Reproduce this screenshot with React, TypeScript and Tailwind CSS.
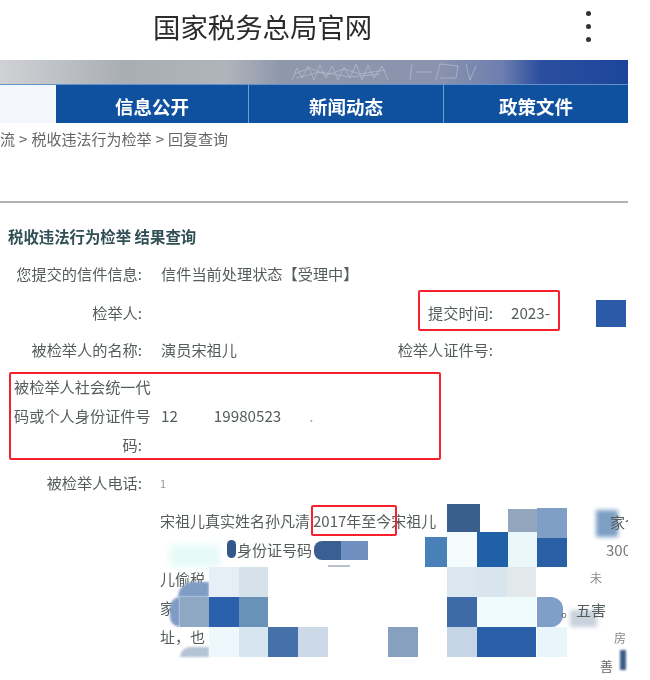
import * as React from 'react';

const cjk = "font-['Noto_Sans_CJK_SC','Noto_Sans',sans-serif]";

// mosaic patches lying over the letter text
const patches = [
	'left-[170px] top-[545px] w-[50px] h-[22px] bg-[#e6faf7] blur-[3px]',
	'left-[447px] top-[504px] w-[33px] h-[28px] bg-[#3a5f8c]',
	'left-[508px] top-[509px] w-[29px] h-[29px] bg-[#93a6bd]',
	'left-[537px] top-[508px] w-[30px] h-[30px] bg-[#7f9fc6]',
	'left-[596px] top-[510px] w-[22px] h-[27px] bg-[#7d9fc4] blur-[2px]',
	'left-[314px] top-[541px] w-[27px] h-[19px] bg-[#3a5f92] rounded-l-lg',
	'left-[341px] top-[541px] w-[27px] h-[19px] bg-[#6e8fc0]',
	'left-[227px] top-[540px] w-[9px] h-[18px] bg-[#33598c] rounded-md',
	'left-[328px] top-[565px] w-[22px] h-[2px] bg-[#b9c2cc]',
	'left-[425px] top-[537px] w-[22px] h-[30px] bg-[#4a80b8]',
	'left-[477px] top-[532px] w-[31px] h-[35px] bg-[#2060a8]',
	'left-[508px] top-[532px] w-[29px] h-[35px] bg-[#eaf7fb]',
	'left-[447px] top-[532px] w-[30px] h-[35px] bg-[#f4fbfd]',
	'left-[537px] top-[538px] w-[30px] h-[29px] bg-[#2a5fa5]',
	'left-[178px] top-[582px] w-[31px] h-[15px] bg-[#7f9cc5] rounded-tl-2xl blur-[1px]',
	'left-[209px] top-[567px] w-[30px] h-[30px] bg-[#e6eff5]',
	'left-[239px] top-[567px] w-[29px] h-[30px] bg-[#d5e2ea]',
	'left-[447px] top-[567px] w-[30px] h-[30px] bg-[#dbe6ee]',
	'left-[477px] top-[567px] w-[30px] h-[30px] bg-[#d8e4ee]',
	'left-[507px] top-[567px] w-[29px] h-[30px] bg-[#e3e8ea]',
	'left-[170px] top-[597px] w-[10px] h-[30px] bg-[#7f9cc5] rounded-l-2xl blur-[1px]',
	'left-[180px] top-[597px] w-[29px] h-[30px] bg-[#8fa8c3]',
	'left-[209px] top-[597px] w-[30px] h-[30px] bg-[#2a60ac]',
	'left-[239px] top-[597px] w-[29px] h-[30px] bg-[#6892b8]',
	'left-[447px] top-[597px] w-[30px] h-[30px] bg-[#3f6aa8]',
	'left-[477px] top-[597px] w-[59px] h-[30px] bg-[#f0fbfd]',
	'left-[537px] top-[597px] w-[26px] h-[30px] bg-[#7f9fc8] rounded-r-xl',
	'left-[570px] top-[610px] w-[27px] h-[17px] bg-[#c8d2dc] blur-[2px]',
	'left-[180px] top-[647px] w-[29px] h-[10px] bg-[#b4c4d4] rounded-tl-xl blur-[1px]',
	'left-[209px] top-[627px] w-[30px] h-[30px] bg-[#eef8fc]',
	'left-[239px] top-[627px] w-[29px] h-[30px] bg-[#d6e5f0]',
	'left-[268px] top-[627px] w-[30px] h-[30px] bg-[#4570a8]',
	'left-[298px] top-[627px] w-[30px] h-[30px] bg-[#ccd9e6]',
	'left-[388px] top-[627px] w-[30px] h-[30px] bg-[#87a0c0]',
	'left-[447px] top-[627px] w-[30px] h-[30px] bg-[#c5d5e5]',
	'left-[477px] top-[627px] w-[59px] h-[30px] bg-[#2a60a8]',
	'left-[537px] top-[627px] w-[30px] h-[30px] bg-[#e8f6fb]',
];

const Row = ({
	label,
	value,
	label2,
	value2,
	className,
}: {
	label: string;
	value?: React.ReactNode;
	label2?: string;
	value2?: string;
	className?: string;
}) => (
	<div className={'flex items-center ' + (className ?? '')}>
		<span className="w-[142px] shrink-0 text-right">{label}</span>
		<span className="ml-[19px] w-[180px] shrink-0 whitespace-nowrap">{value}</span>
		{label2 && <span className="w-[152px] shrink-0 text-right">{label2}</span>}
		{value2 && <span className="ml-[18px] whitespace-nowrap">{value2}</span>}
	</div>
);

export default function App() {
	return (
		<div className={'relative w-[650px] h-[680px] overflow-hidden bg-white blur-[0.4px] ' + cjk}>
			<header className="relative h-[60px] w-[628px] flex items-center">
				<h1 className="ml-[153px] -mt-[7px] text-[27.4px] font-normal text-[#2b2b2b] whitespace-nowrap leading-none">
					国家税务总局官网
				</h1>
				<div className="absolute left-[586px] top-[11px] flex flex-col gap-[8px]">
					<span className="size-[5px] rounded-full bg-[#333]" />
					<span className="size-[5px] rounded-full bg-[#333]" />
					<span className="size-[5px] rounded-full bg-[#333]" />
				</div>
			</header>

			<main className="w-[628px] overflow-hidden">
				<div className="relative h-[24px] bg-[linear-gradient(90deg,#d0d2d5_0%,#a9adb4_20%,#b0b4bb_36%,#8e97ab_45%,#8a93ad_70%,#6d7eaf_80%,#2b4f9f_86%,#1c459b_100%)]">
					<svg className="absolute left-[290px] top-0" width="200" height="24" viewBox="0 0 200 24" fill="none" stroke="#b6bdcf" strokeWidth="0.7">
						<path d="M2 20 L7 8 L12 18 L18 6 L24 20 L30 5 L36 18 L42 6 L48 20 L54 7 L60 18 L66 4 L72 20 L78 5 L84 18 L92 6 L98 20" />
						<path d="M4 14 L20 8 L36 15 L54 9 L70 14 L96 10 M6 18 L30 12 L60 17 L90 14" />
						<path d="M120 20 L122 4 M126 12 L142 12 M146 20 L150 4 L168 6 L166 18 L150 18 M176 4 L180 20 L186 6" />
					</svg>
				</div>
				<nav className="flex h-[39px] pt-0 bg-[#10519f] border-t border-[#5f93c9] text-white font-bold text-[18.5px]">
					<div className="w-[56px] bg-[#f3f7fb]" />
					<a className="w-[193px] pt-[6px] flex items-center justify-center border-r border-[#6ea0d0]">信息公开</a>
					<a className="w-[195px] pt-[6px] flex items-center justify-center border-r border-[#6ea0d0]">新闻动态</a>
					<a className="flex-1 pt-[6px] flex items-center justify-center">政策文件</a>
				</nav>
				<div className="h-[80px] border-b-2 border-[#b0b2b4] pt-[5px] text-[15px] leading-[22px] text-[#666] whitespace-nowrap [word-spacing:0.75px]">
					流 &gt; 税收违法行为检举 &gt; 回复查询
				</div>

				<section className="pt-[23px] text-[15.2px] text-[#555c5c]">
					<h2 className="ml-[8px] text-[15.4px] leading-[20px] font-bold text-[#2f4f55]">税收违法行为检举 结果查询</h2>
					<div className="mt-[15px] flex flex-col">
						<Row className="h-[24px]" label="您提交的信件信息:" value="信件当前处理状态【受理中】" />
						<Row className="h-[24px] mt-[15px]" label="检举人:" label2="提交时间:" value="" value2="2023-" />
						<Row className="h-[24px] mt-[13px]" label="被检举人的名称:" value="演员宋祖儿" label2="检举人证件号:" />
						<div className="flex mt-[11px] items-center">
							<div className="w-[142px] shrink-0 leading-[29px]">
								<span className="block ml-[14px] whitespace-nowrap">被检举人社会统一代</span>
								<span className="block ml-[14px] whitespace-nowrap">码或个人身份证件号</span>
								<span className="block text-right">码:</span>
							</div>
							<div className="ml-[19px] flex whitespace-nowrap">
								<span>12</span>
								<span className="ml-[36px]">19980523</span>
								<span className="ml-[28px] text-[#aaa]">.</span>
							</div>
						</div>
						<Row className="h-[24px] mt-[11px]" label="被检举人电话:" />
					</div>
					<div className="mt-[12px] ml-[160px] text-[15px] leading-[29px] whitespace-nowrap">
						<p>
							宋祖儿真实姓名孙凡清<span className="ml-[3px]">2017年至今宋祖儿</span>
						</p>
						<p className="ml-[77px]">身份证号码</p>
						<p>儿偷税</p>
						<p>家</p>
						<p>址，也</p>
					</div>
				</section>
			</main>

			{patches.map((p) => (
				<div key={p} className={'absolute ' + p} />
			))}

			{/* fragments left showing beside the mosaic */}
			<span className="absolute left-[610px] top-[511px] text-[15px] leading-[22px] text-[#555c5c] w-[18px] overflow-hidden whitespace-nowrap">家个</span>
			<span className="absolute left-[606px] top-[539px] text-[15px] leading-[22px] text-[#777] w-[22px] overflow-hidden">300</span>
			<span className="absolute left-[561px] top-[599px] text-[15px] leading-[22px] text-[#555c5c] whitespace-nowrap">。五害</span>
			<span className="absolute left-[590px] top-[570px] text-[12px] leading-[16px] text-[#888]">未</span>
			<span className="absolute left-[614px] top-[630px] text-[12px] leading-[16px] text-[#888]">房</span>
			<span className="absolute left-[600px] top-[658px] text-[13px] leading-[16px] text-[#666]">善</span>
			<span className="absolute left-[160px] top-[476px] text-[11px] leading-[14px] text-[#999]">1</span>
			<div className="absolute left-[620px] top-[650px] w-[6px] h-[20px] bg-[#3b5d86] blur-[1px]" />
			<div className="absolute left-[596px] top-[300px] w-[30px] h-[27px] bg-[#2a5aa8]" />

			{/* red note boxes */}
			<div className="absolute left-[418px] top-[290px] w-[142px] h-[41px] border-2 border-[#f5222d] rounded-[2px]" />
			<div className="absolute left-[9px] top-[372px] w-[432px] h-[88px] border-2 border-[#f5222d] rounded-[2px]" />
			<div className="absolute left-[311px] top-[505px] w-[86px] h-[31px] border-2 border-[#f5222d] rounded-[2px]" />
		</div>
	);
}
